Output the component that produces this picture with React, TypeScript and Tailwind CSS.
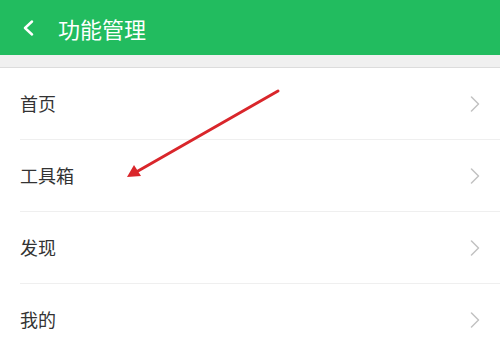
const items = ['首页', '工具箱', '发现', '我的']

export default function App() {
  return (
    <div
      className="relative w-[500px] h-[338px] overflow-hidden bg-white"
      style={{ fontFamily: '"Noto Sans CJK SC", "Noto Sans", sans-serif' }}
    >
      <header className="h-[55px] bg-[#22bc5f] flex items-center pl-[22px]">
        <svg width="12" height="16" viewBox="0 0 12 16" className="shrink-0">
          <path d="M10 1.5 L3 8 L10 14.5" fill="none" stroke="#fff" strokeWidth="2.4" strokeLinecap="round" strokeLinejoin="round" />
        </svg>
        <span className="ml-[24px] text-[22px] text-white leading-none">功能管理</span>
      </header>
      <div className="h-[13px] bg-[#f0f0f0] border-b border-[#dcdcdc]" />

      <ul className="pl-[20px]">
        {items.map((name, i) => (
          <li
            key={name}
            className={
              'h-[72px] flex items-center justify-between pr-[20px] ' +
              (i < items.length - 1 ? 'border-b border-[#efefef]' : '')
            }
          >
            <span className="text-[18px] text-[#333] leading-none -mt-[2px]">{name}</span>
            <svg width="10" height="16" viewBox="0 0 10 16" className="shrink-0">
              <path d="M1.5 1 L8.5 8 L1.5 15" fill="none" stroke="#c2c2c2" strokeWidth="1.5" strokeLinecap="round" strokeLinejoin="round" />
            </svg>
          </li>
        ))}
      </ul>

      {/* annotation arrow */}
      <svg className="absolute left-0 top-0 pointer-events-none" width="500" height="338">
        <line x1="278" y1="91" x2="138" y2="171" stroke="#d9262b" strokeWidth="3" strokeLinecap="round" />
        <polygon points="127,177 134,165 141,176" fill="#d9262b" />
      </svg>
    </div>
  )
}
